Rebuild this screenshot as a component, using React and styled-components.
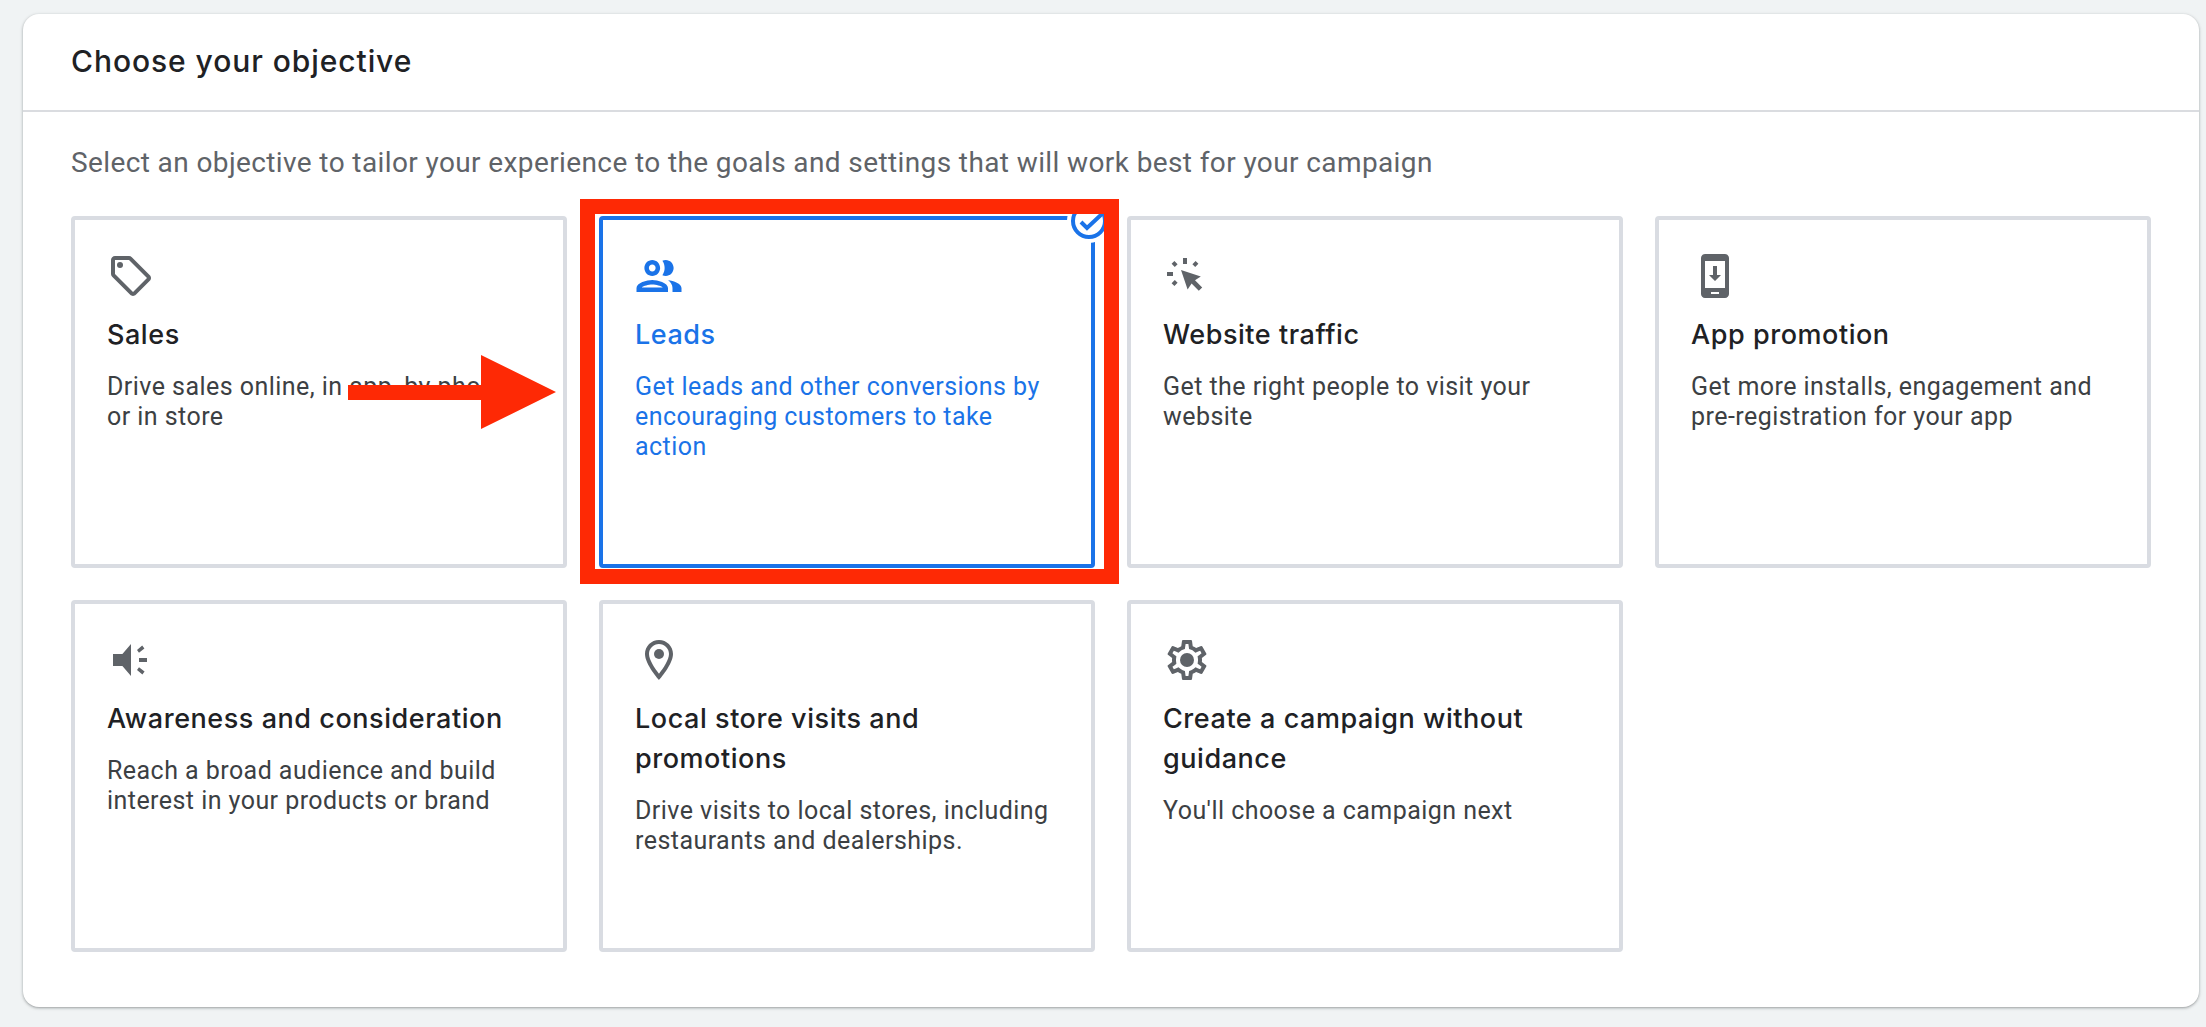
import React from 'react';
import styled, { createGlobalStyle } from 'styled-components';

const Global = createGlobalStyle`
  html, body { margin: 0; padding: 0; background: #f0f3f4; }
  body { font-family: Roboto, "Liberation Sans", sans-serif; }
`;
const Page = styled.div`
  width: 2206px; height: 1027px; box-sizing: border-box; padding: 14px 7px 0 23px; overflow: hidden;
`;
const Card = styled.section`
  width: 2176px; height: 993px; box-sizing: border-box; background: #fff; border-radius: 16px;
  box-shadow: 0 1px 2px rgba(60,64,67,.3), 0 1px 3px 1px rgba(60,64,67,.15);
`;
const Header = styled.header`
  height: 96px; box-sizing: content-box; border-bottom: 2px solid #dadce0; padding-left: 48px;
  display: flex; align-items: center;
`;
const Title = styled.h1`
  margin: -2px 0 0; font: 500 30px/40px Inter, sans-serif; color: #202124; letter-spacing: .93px;
`;
const Body = styled.div`
  padding: 31px 48px 0 48px;
`;
const Intro = styled.p`
  margin: 0 0 32px 0; font: 400 28px/40px Roboto, sans-serif; color: #5f6368; letter-spacing: .39px;
`;
const Grid = styled.div`
  display: grid; grid-template-columns: repeat(4, 496px); grid-auto-rows: 352px; gap: 32px;
  margin-top: 33px;
`;
const Tile = styled.div`
  position: relative; box-sizing: border-box; padding: 32px; border-radius: 4px;
  border: 4px solid ${p => (p.$selected ? '#1a73e8' : '#d9dce2')};
  background: #fff;
`;
const Icon = styled.svg`
  display: block; width: 48px; height: 48px; fill: ${p => (p.$selected ? '#1a73e8' : '#5f6368')};
`;
const TileTitle = styled.h2`
  margin: 15px 0 17px; font: 500 27px/40px Inter, sans-serif; letter-spacing: .55px;
  color: ${p => (p.$selected ? '#1a73e8' : '#202124')};
`;
const TileText = styled.p`
  margin: 0; font: 400 25px/30px Roboto, sans-serif; letter-spacing: .45px;
  color: ${p => (p.$selected ? '#1a73e8' : '#3c4043')};
`;
const Badge = styled.svg`
  position: absolute; top: -21px; right: -20px; width: 44px; height: 44px; overflow: visible;
`;
const RedFrame = styled.div`
  position: absolute; top: -21px; left: -23px; width: 539px; height: 385px; box-sizing: border-box;
  border: 15px solid #fe2905; pointer-events: none;
`;
const RedArrow = styled.svg`
  position: absolute; left: 273px; top: 135px; width: 208px; height: 74px; fill: #fe2905;
`;

const paths = {
  tag: <><path d="M21.41 11.58l-9-9C12.05 2.22 11.55 2 11 2H4c-1.1 0-2 .9-2 2v7c0 .55.22 1.05.59 1.42l9 9c.36.36.86.58 1.41.58s1.05-.22 1.41-.59l7-7c.37-.36.59-.86.59-1.41s-.23-1.06-.59-1.42zM13 20.01L4 11V4h7v-.01l9 9-7 7.02z" /><circle cx="6.5" cy="6.5" r="1.5" /></>,
  people: <g transform="translate(-1.5 -1.7) scale(1.125 1.143)"><path d="M9 13.75c-2.34 0-7 1.17-7 3.5V19h14v-1.75c0-2.33-4.66-3.5-7-3.5zM4.34 17c.84-.58 2.87-1.25 4.66-1.25s3.82.67 4.66 1.25H4.34zM9 12c1.93 0 3.5-1.57 3.5-3.5S10.93 5 9 5 5.5 6.57 5.5 8.5 7.07 12 9 12zm0-5c.83 0 1.5.67 1.5 1.5S9.83 10 9 10s-1.5-.67-1.5-1.5S8.17 7 9 7zm7.04 6.81c1.16.84 1.96 1.96 1.96 3.44V19h4v-1.75c0-2.02-3.5-3.17-5.96-3.44zM15 12c1.93 0 3.5-1.57 3.5-3.5S16.93 5 15 5c-.54 0-1.04.13-1.5.35.63.89 1 1.98 1 3.15s-.37 2.26-1 3.15c.46.22.96.35 1.5.35z" /></g>,
  cursor: <>
    <path d="M9 9l3.3 9.7 2-3 3.6 3.7 1.7-1.7-3.6-3.6 2.9-1.9z" />
    <rect x="2" y="10" width="3" height="2" /><rect x="10" y="3" width="2" height="3" />
    <path d="M5.7 4.5l1.6 1.6-1.4 1.4-1.6-1.6zM16.3 4.5l1.4 1.4-1.6 1.6-1.4-1.4zM5.9 14l1.4 1.4-1.6 1.6-1.4-1.4z" />
  </>,
  phone: <path fillRule="evenodd" d="M17 1H7C5.9 1 5 1.9 5 3v18c0 1.1.9 2 2 2h10c1.1 0 2-.9 2-2V3c0-1.1-.9-2-2-2zM7 4.5h10V18H7zM10 20h4v1h-4zM11 7h2v4.5h2L12 14.5 9 11.5h2z" />,
  speaker: <>
    <path d="M3 9h4.7L12 4v16l-4.3-5H3z" />
    <path d="M15 7l2.6-2.2 1.1 1.4L16 8.4zM16 11h4v2h-4zM15 17l1-1.4 2.8 2.2-1.1 1.4z" />
  </>,
  pin: <><path d="M12 2C8.13 2 5 5.13 5 9c0 5.25 7 13 7 13s7-7.75 7-13c0-3.87-3.13-7-7-7zM7 9c0-2.76 2.24-5 5-5s5 2.24 5 5c0 2.88-2.88 7.19-5 9.88C9.92 16.21 7 11.85 7 9z" /><circle cx="12" cy="9" r="2.5" /></>,
  gear: <><path d="M19.43 12.98c.04-.32.07-.64.07-.98 0-.34-.03-.66-.07-.98l2.11-1.65c.19-.15.24-.42.12-.64l-2-3.46c-.09-.16-.26-.25-.44-.25-.06 0-.12.01-.17.03l-2.49 1c-.52-.4-1.08-.73-1.69-.98l-.38-2.65C14.46 2.18 14.25 2 14 2h-4c-.25 0-.46.18-.49.42l-.38 2.65c-.61.25-1.17.59-1.69.98l-2.49-1c-.06-.02-.12-.03-.18-.03-.17 0-.34.09-.43.25l-2 3.46c-.13.22-.07.49.12.64l2.11 1.65c-.04.32-.07.65-.07.98 0 .33.03.66.07.98l-2.11 1.65c-.19.15-.24.42-.12.64l2 3.46c.09.16.26.25.44.25.06 0 .12-.01.17-.03l2.49-1c.52.4 1.08.73 1.69.98l.38 2.65c.03.24.24.42.49.42h4c.25 0 .46-.18.49-.42l.38-2.65c.61-.25 1.17-.59 1.69-.98l2.49 1c.06.02.12.03.18.03.17 0 .34-.09.43-.25l2-3.46c.12-.22.07-.49-.12-.64l-2.11-1.65zm-1.98-1.71c.04.31.05.52.05.73 0 .21-.02.43-.05.73l-.14 1.13.89.7 1.08.84-.7 1.21-1.27-.51-1.04-.42-.9.68c-.43.32-.84.56-1.25.73l-1.06.43-.16 1.13-.2 1.35h-1.4l-.19-1.35-.16-1.13-1.06-.43c-.43-.18-.83-.41-1.23-.71l-.91-.7-1.06.43-1.27.51-.7-1.21 1.08-.84.89-.7-.14-1.13c-.03-.31-.05-.54-.05-.74s.02-.43.05-.73l.14-1.13-.89-.7-1.08-.84.7-1.21 1.27.51 1.04.42.9-.68c.43-.32.84-.56 1.25-.73l1.06-.43.16-1.13.2-1.35h1.39l.19 1.35.16 1.13 1.06.43c.43.18.83.41 1.23.71l.91.7 1.06-.43 1.27-.51.7 1.21-1.07.85-.89.7.14 1.13z" /><circle cx="12" cy="12" r="3.5" /></>,
};

const tiles = [
  { icon: 'tag', title: 'Sales', text: 'Drive sales online, in app, by phone or in store', arrow: true },
  { icon: 'people', title: 'Leads', text: 'Get leads and other conversions by encouraging customers to take action', selected: true },
  { icon: 'cursor', title: 'Website traffic', text: 'Get the right people to visit your website' },
  { icon: 'phone', title: 'App promotion', text: 'Get more installs, engagement and pre-registration for your app' },
  { icon: 'speaker', title: 'Awareness and consideration', text: 'Reach a broad audience and build interest in your products or brand' },
  { icon: 'pin', title: 'Local store visits and promotions', text: 'Drive visits to local stores, including restaurants and dealerships.' },
  { icon: 'gear', title: 'Create a campaign without guidance', text: "You'll choose a campaign next" },
];

export default function App() {
  return (
    <Page>
      <Global />
      <Card>
        <Header><Title>Choose your objective</Title></Header>
        <Body>
          <Intro>Select an objective to tailor your experience to the goals and settings that will work best for your campaign</Intro>
          <Grid>
            {tiles.map(t => (
              <Tile key={t.title} $selected={t.selected}>
                <Icon viewBox="0 0 24 24" $selected={t.selected}>{paths[t.icon]}</Icon>
                <TileTitle $selected={t.selected}>{t.title}</TileTitle>
                <TileText $selected={t.selected}>{t.text}</TileText>
                {t.selected && (
                  <Badge viewBox="0 0 44 44">
                    <circle cx="22" cy="22" r="22" fill="#fff" />
                    <circle cx="22" cy="22" r="16" fill="#fff" stroke="#1a73e8" strokeWidth="4" />
                    <path d="M14 23l6 6 16-15" fill="none" stroke="#1a73e8" strokeWidth="4" />
                  </Badge>
                )}
                {t.selected && <RedFrame />}
                {t.arrow && (
                  <RedArrow viewBox="0 0 208 74">
                    <path d="M0 30h133V0l75 37-75 37V45H0z" />
                  </RedArrow>
                )}
              </Tile>
            ))}
          </Grid>
        </Body>
      </Card>
    </Page>
  );
}
